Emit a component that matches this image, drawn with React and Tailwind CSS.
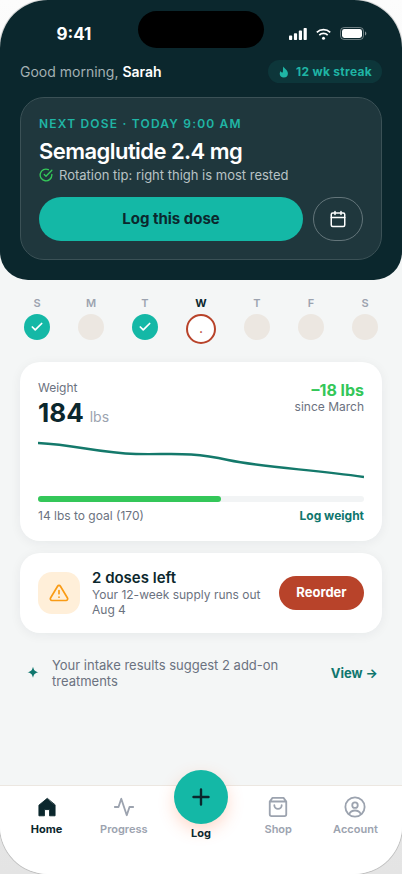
import React from "react";

const days = [
  { label: "S", state: "done" },
  { label: "M", state: "idle" },
  { label: "T", state: "done" },
  { label: "W", state: "today" },
  { label: "T", state: "idle" },
  { label: "F", state: "idle" },
  { label: "S", state: "idle" },
];

function StatusBar() {
  return (
    <div className="flex items-start justify-between pt-[11px]">
      <div className="flex h-[47px] flex-1 items-center justify-center text-[17px] font-bold text-white">
        <span className="pl-[10px]">9:41</span>
      </div>
      <div className="h-[37px] w-[126px] rounded-full bg-black" />
      <div className="flex h-[45px] flex-1 items-center justify-center">
        <div className="flex items-center gap-[9px] pr-[10px]">
          <svg width="18" height="12" viewBox="0 0 18 12" fill="#fff" aria-hidden="true">
            <rect x="0" y="7.6" width="3.2" height="4.4" rx="0.8" />
            <rect x="4.9" y="5.2" width="3.2" height="6.8" rx="0.8" />
            <rect x="9.8" y="2.6" width="3.2" height="9.4" rx="0.8" />
            <rect x="14.6" y="0" width="3.2" height="12" rx="0.8" />
          </svg>
          <svg width="15" height="12" viewBox="0 0 15 12" fill="none" stroke="#fff" strokeWidth="1.7" aria-hidden="true">
            <path d="M0.8 4.4a9.6 9.6 0 0 1 13.4 0" />
            <path d="M3.3 7.1a6 6 0 0 1 8.4 0" />
            <circle cx="7.5" cy="10.2" r="1.5" fill="#fff" stroke="none" />
          </svg>
          <svg width="27" height="13" viewBox="0 0 27 13" aria-hidden="true">
            <rect x="0.5" y="0.5" width="23" height="12" rx="3.6" fill="none" stroke="#fff" strokeOpacity="0.4" />
            <rect x="2" y="2" width="20" height="9" rx="2.4" fill="#fff" />
            <path d="M25 4.5v4c0.8-0.3 1.3-1.1 1.3-2s-0.5-1.7-1.3-2" fill="#fff" fillOpacity="0.5" />
          </svg>
        </div>
      </div>
    </div>
  );
}

function Hero() {
  return (
    <header className="rounded-b-[28px] bg-[#0b272d] pb-5">
      <StatusBar />
      <div className="px-5">
        <div className="flex items-center justify-between pt-[2px]">
          <p className="text-[14px] leading-[20px] text-[#a3b0b3]">
            Good morning, <strong className="font-semibold text-white">Sarah</strong>
          </p>
          <div className="flex h-[23px] items-center gap-[6px] rounded-full bg-[#0d363a] px-[10px] text-[12px] font-bold tracking-[0.3px] text-[#1fb5a5]">
            <svg width="12" height="12" viewBox="0 0 12 12" fill="currentColor" aria-hidden="true">
              <path d="M5.400 0.500C6.200 2.400 9.900 4.200 9.900 7.400A4.100 4.100 0 0 1 5.800 11.500C3.400 11.500 1.700 9.900 1.700 7.700c0-1.100.4-2 1.100-2.800 .2 1.100.9 1.700 1.500 1.700C5.500 6.500 4.500 3.300 5.400.5z" />
            </svg>
            12 wk streak
          </div>
        </div>

        <section className="mt-[14px] rounded-[24px] border border-[#3b5156] bg-[#1f373d] p-[18px]">
          <p className="text-[12px] leading-[16px] font-semibold tracking-[1.2px] text-[#1fb5a5]">
            NEXT DOSE · TODAY 9:00 AM
          </p>
          <h1 className="mt-[5px] text-[22px] leading-[28px] font-semibold tracking-tight text-white">
            Semaglutide 2.4 mg
          </h1>
          <p className="mt-[2px] flex items-center gap-[6px] text-[13px] leading-[16px] text-[#b9c3c5]">
            <svg width="14" height="14" viewBox="0 0 24 24" fill="none" stroke="#34c759" strokeWidth="2.4" strokeLinecap="round" strokeLinejoin="round" aria-hidden="true">
              <path d="M22 11.080V12a10 10 0 1 1-5.930-9.140" />
              <path d="M22 4 12 14.010l-3-3" />
            </svg>
            Rotation tip: right thigh is most rested
          </p>
          <div className="mt-[14px] flex gap-[10px]">
            <button type="button" className="h-[44px] flex-1 rounded-full bg-[#14b8a6] text-[15px] font-bold text-[#0b272d]">
              Log this dose
            </button>
            <button type="button" aria-label="Open calendar" className="flex h-[44px] w-[50px] items-center justify-center rounded-full border border-[#63757a] text-white">
              <svg width="18" height="18" viewBox="0 0 24 24" fill="none" stroke="currentColor" strokeWidth="2" strokeLinecap="round" strokeLinejoin="round" aria-hidden="true">
                <rect x="3" y="4" width="18" height="18" rx="2" />
                <path d="M3 10h18M8 2v4M16 2v4" />
              </svg>
            </button>
          </div>
        </section>
      </div>
    </header>
  );
}

function DayMark({ state }) {
  if (state === "done") {
    return (
      <span className="flex size-[26px] items-center justify-center rounded-full bg-[#14b8a6]">
        <svg width="14" height="14" viewBox="0 0 24 24" fill="none" stroke="#fff" strokeWidth="3" strokeLinecap="round" strokeLinejoin="round" aria-hidden="true">
          <path d="M20 6 9 17l-5-5" />
        </svg>
      </span>
    );
  }
  if (state === "today") {
    return (
      <span className="flex size-[30px] items-center justify-center rounded-full border-2 border-[#b8432a] bg-white text-[11px] leading-[11px] font-bold text-[#b8432a]">
        .
      </span>
    );
  }
  return <span className="size-[26px] rounded-full bg-[#ece7e1]" />;
}

function WeekStrip() {
  return (
    <ul className="flex items-start justify-between px-6 pt-4">
      {days.map((day, i) => (
        <li key={i} className="flex flex-col items-center gap-1">
          <span
            className={
              day.state === "today"
                ? "text-[11px] leading-[14px] font-bold text-[#0b272d]"
                : "text-[11px] leading-[14px] font-semibold text-[#9ca3af]"
            }
          >
            {day.label}
          </span>
          <DayMark state={day.state} />
        </li>
      ))}
    </ul>
  );
}

function WeightCard() {
  return (
    <section className="rounded-[20px] bg-white p-[18px] shadow-[0_2px_12px_rgba(13,42,48,0.06)]">
      <div className="flex items-start justify-between">
        <div>
          <p className="text-[12px] leading-[16px] text-[#6b7280]">Weight</p>
          <div className="flex items-baseline gap-[6px] text-[26px] leading-[34px] font-bold text-[#0b272d]">
            <span>184</span>
            <span className="text-[14px] leading-[16px] font-normal text-[#9ca3af]">lbs</span>
          </div>
        </div>
        <div className="text-right">
          <p className="text-[16px] leading-[20px] font-bold text-[#34c759]">–18 lbs</p>
          <p className="text-[12px] leading-[13px] text-[#6b7280]">since March</p>
        </div>
      </div>
      <svg className="mt-[8px] block h-[48px] w-full" viewBox="0 0 326 48" preserveAspectRatio="none" fill="none" role="img" aria-label="Weight trend">
        <path d="M0 5C39 7 60 15 98 16C130 17 150 13 190 22C229 30 270 31 326 39" stroke="#14796b" strokeWidth="2.4" />
      </svg>
      <div className="mt-[10px] h-[6px] rounded-full bg-[#f2f4f5]">
        <div className="h-[6px] w-[56%] rounded-full bg-[#34c759]" />
      </div>
      <div className="mt-[6px] flex items-center justify-between text-[12px] leading-[15px]">
        <span className="text-[#6b7280]">14 lbs to goal (170)</span>
        <a href="#weight" className="font-bold text-[#0f766e]">Log weight</a>
      </div>
    </section>
  );
}

function SupplyCard() {
  return (
    <section className="flex items-center gap-3 rounded-[20px] bg-white px-[18px] py-4 shadow-[0_2px_12px_rgba(13,42,48,0.06)]">
      <span className="flex size-[42px] shrink-0 items-center justify-center rounded-[14px] bg-[#ffefd9]">
        <svg width="20" height="20" viewBox="0 0 24 24" fill="none" stroke="#f99b15" strokeWidth="2" strokeLinecap="round" strokeLinejoin="round" aria-hidden="true">
          <path d="M10.290 3.860 1.820 18a2 2 0 0 0 1.710 3h16.940a2 2 0 0 0 1.710-3L13.710 3.860a2 2 0 0 0-3.420 0z" />
          <path d="M12 9v4M12 17h.01" />
        </svg>
      </span>
      <div className="flex-1">
        <h2 className="text-[15px] leading-[18px] font-semibold text-[#0b272d]">2 doses left</h2>
        <p className="text-[12px] leading-[15px] text-[#6b7280]">Your 12-week supply runs out Aug 4</p>
      </div>
      <button type="button" className="h-[34px] w-[85px] shrink-0 rounded-full bg-[#b8432a] text-[13px] font-bold text-white">
        Reorder
      </button>
    </section>
  );
}

function Suggestion() {
  return (
    <div className="mt-3 flex items-center gap-3 px-1 py-[12px]">
      <svg className="ml-[2px] shrink-0" width="14" height="14" viewBox="0 0 14 14" fill="#0f766e" aria-hidden="true">
        <path d="M7 0.800C8 4.600 8.700 5.300 12.500 6.300C8.700 7.300 8 8 7 11.800C6 8 5.300 7.300 1.500 6.300C5.300 5.300 6 4.600 7 0.800Z" />
      </svg>
      <p className="w-0 grow text-[13px] leading-[16px] text-[#6b7280]">Your intake results suggest 2 add-on treatments</p>
      <a href="#addons" className="ml-8 text-[13px] leading-[16px] font-bold text-[#0f766e]">View →</a>
    </div>
  );
}

function TabItem({ label, active, children }) {
  return (
    <a
      href={"#" + label.toLowerCase()}
      className={
        active
          ? "flex flex-1 flex-col items-center gap-1 pt-[10px] text-[11px] leading-[14px] font-bold text-[#0b272d]"
          : "flex flex-1 flex-col items-center gap-1 pt-[10px] text-[11px] leading-[14px] font-semibold text-[#9ca3af]"
      }
    >
      <svg width="22" height="22" viewBox="0 0 24 24" fill="none" stroke="currentColor" strokeWidth="2" strokeLinecap="round" strokeLinejoin="round" aria-hidden="true">
        {children}
      </svg>
      {label}
    </a>
  );
}

function TabBar() {
  return (
    <nav className="flex h-[89px] items-start border-t border-[#ece7e1] bg-white px-2">
      <TabItem label="Home" active>
        <path d="M12 2.800 3.200 10V21.600h6v-6.800h5.600v6.800h6V10z" fill="currentColor" strokeWidth="1" />
      </TabItem>
      <TabItem label="Progress">
        <path d="M22 12h-4l-3 9L9 3l-3 9H2" />
      </TabItem>
      <button type="button" className="-mt-4 flex flex-1 flex-col items-center gap-[2px] text-[11px] leading-[14px] font-bold text-[#0b272d]">
        <span className="flex size-[54px] items-center justify-center rounded-full bg-[#14b8a6] shadow-[0_6px_16px_rgba(255,107,53,0.25)]">
          <svg width="24" height="24" viewBox="0 0 24 24" fill="none" stroke="currentColor" strokeWidth="2.400" strokeLinecap="round" aria-hidden="true">
            <path d="M12 4.500v15M4.500 12h15" />
          </svg>
        </span>
        Log
      </button>
      <TabItem label="Shop">
        <path d="M6 2 3 6v14a2 2 0 0 0 2 2h14a2 2 0 0 0 2-2V6l-3-4zM3 6h18M16 10a4 4 0 0 1-8 0" />
      </TabItem>
      <TabItem label="Account">
        <circle cx="12" cy="12" r="10.500" />
        <circle cx="12" cy="10" r="3" />
        <path d="M5.800 19.500c1.200-2.600 3.500-3.700 6.200-3.700s5 1.100 6.200 3.700" />
      </TabItem>
    </nav>
  );
}

export default function App() {
  return (
    <div className="min-h-screen bg-linear-to-b from-[#fcfcfc] to-[#e4e4e4] font-['Inter','Liberation_Sans',sans-serif] antialiased">
      <div className="flex min-h-screen flex-col overflow-hidden rounded-[48px] bg-[#f4f6f6] shadow-[0_0_0_1px_rgba(0,0,0,0.15)]">
        <Hero />
        <main className="flex-1">
          <WeekStrip />
          <div className="flex flex-col gap-3 px-5 pt-[18px]">
            <WeightCard />
            <SupplyCard />
          </div>
          <div className="px-5">
            <Suggestion />
          </div>
        </main>
        <TabBar />
      </div>
    </div>
  );
}
